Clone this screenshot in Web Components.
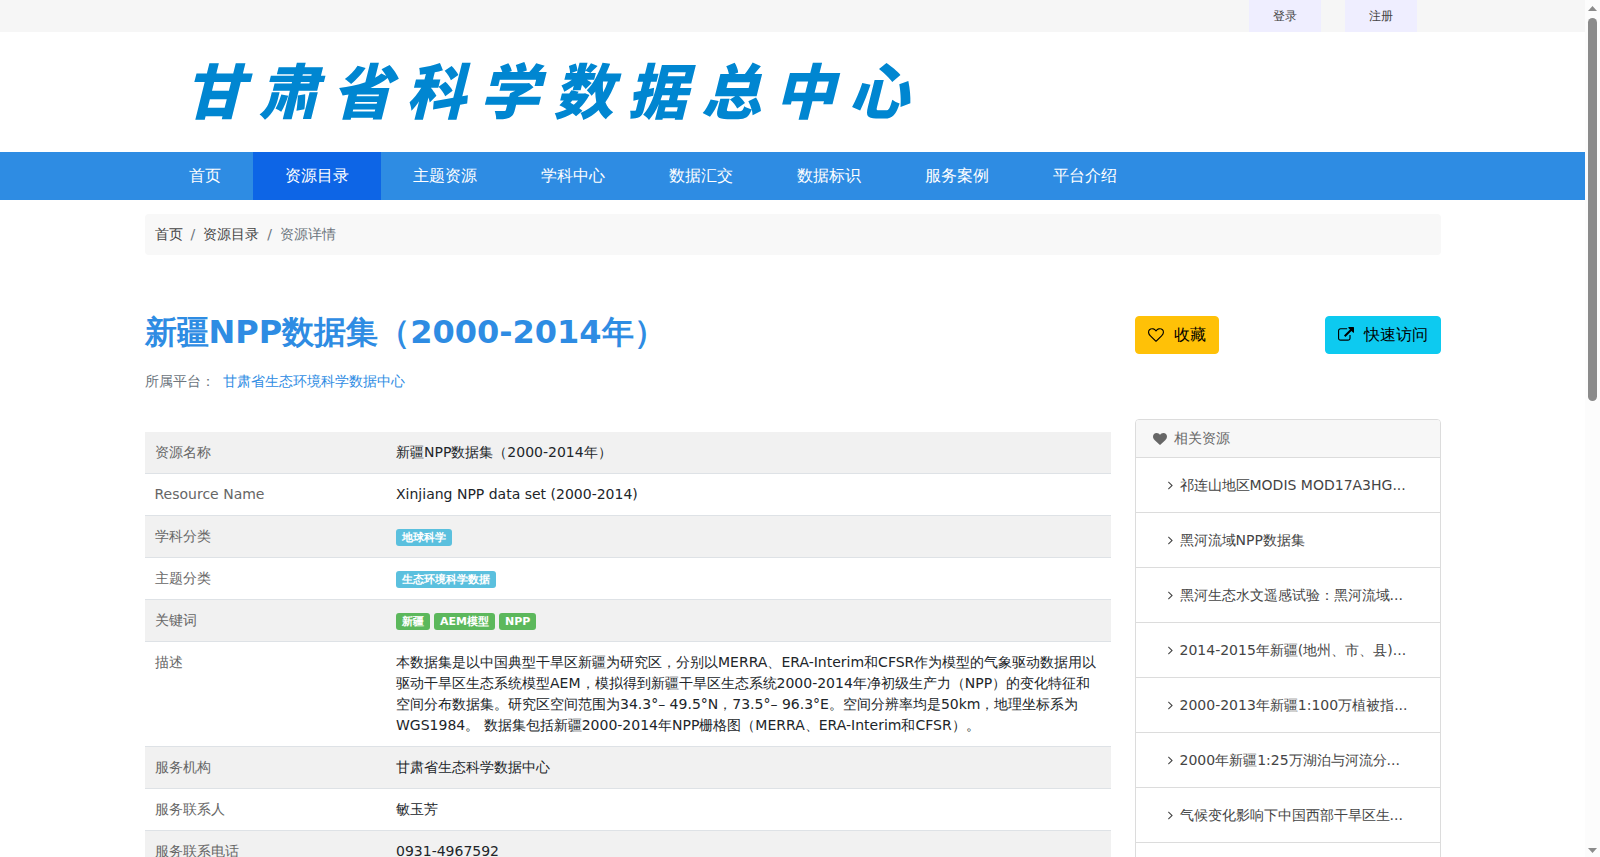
<!DOCTYPE html>
<html>
<head>
<meta charset="utf-8">
<meta name="viewport" content="width=device-width, initial-scale=1">
<title>新疆NPP数据集（2000-2014年） - 甘肃省科学数据总中心</title>
<style>
  body {
    margin: 0;
    background: #fff;
    color: #212529;
    font: 14px/21px "DejaVu Sans", sans-serif;
  }
</style>
</head>
<body>
<gs-app></gs-app>

<template id="app-tpl">
  <style>
    :host { display: flex; height: 100vh; overflow: hidden; }
    .page { flex: 1; min-width: 0; overflow-y: auto; scrollbar-width: none; }
    .wrap { max-width: 1296px; margin: 0 auto; padding: 0 12px; }
    .row { display: grid; grid-template-columns: minmax(0, 1fr) 306px; gap: 24px; padding: 0 0 48px; }
    h1 { margin: 58px 0 0; font-size: 32px; line-height: 38px; font-weight: 700; color: #2e8ce3; }
    .platform { margin: 20px 0 40px; color: #6c757d; }
    .platform a { color: #2e8ce3; text-decoration: none; margin-left: 4px; }
    .actions { display: flex; justify-content: space-between; margin: 61px 0 65px; }
  </style>
  <div class="page">
    <gs-topbar></gs-topbar>
    <gs-brand>甘肃省科学数据总中心</gs-brand>
    <gs-nav></gs-nav>
    <main class="wrap">
      <gs-breadcrumb></gs-breadcrumb>
      <div class="row">
        <section>
          <h1>新疆NPP数据集（2000-2014年）</h1>
          <p class="platform">所属平台： <a href="#platform">甘肃省生态环境科学数据中心</a></p>
          <gs-details></gs-details>
        </section>
        <aside>
          <div class="actions">
            <gs-button icon="heart-o" style="--bg:#ffc107">收藏</gs-button>
            <gs-button icon="external" style="--bg:#0dcaf0">快速访问</gs-button>
          </div>
          <gs-related></gs-related>
        </aside>
      </div>
    </main>
  </div>
  <gs-scrollbar></gs-scrollbar>
</template>

<template id="topbar-tpl">
  <style>
    :host { display: block; background: #f6f6f6; }
    nav { max-width: 1248px; margin: 0 auto; padding: 0 24px; display: flex; justify-content: flex-end; gap: 24px; }
    a { padding: 0 24px; font-size: 12px; line-height: 32px; background: #efeeff; color: #444; text-decoration: none; }
  </style>
  <nav aria-label="用户"><a href="#login">登录</a><a href="#register">注册</a></nav>
</template>

<template id="brand-tpl">
  <style>
    :host { display: block; background: #fff; }
    div { max-width: 1296px; margin: 0 auto; padding: 16px 12px 24px; }
    a {
      display: block; width: 724px; margin-left: 40px;
      font: italic 900 60px/80px "Noto Sans CJK SC", sans-serif;
      color: #0086d1; text-decoration: none; text-align: justify; text-align-last: justify;
    }
  </style>
  <div><a href="#home"><slot></slot></a></div>
</template>

<template id="nav-tpl">
  <style>
    :host { display: block; background: #2e8ce3; }
    nav { max-width: 1272px; margin: 0 auto; display: flex; }
    a { padding: 0 32px; font-size: 16px; line-height: 48px; color: #fff; text-decoration: none; }
    a[aria-current] { background: #0d65e6; }
  </style>
  <nav aria-label="主导航">
    <a href="#home">首页</a>
    <a href="#catalog" aria-current="page">资源目录</a>
    <a href="#topics">主题资源</a>
    <a href="#centers">学科中心</a>
    <a href="#submit">数据汇交</a>
    <a href="#identity">数据标识</a>
    <a href="#cases">服务案例</a>
    <a href="#about">平台介绍</a>
  </nav>
</template>

<template id="breadcrumb-tpl">
  <style>
    :host { display: block; margin-top: 14px; }
    ol { display: flex; margin: 0; padding: 10px; list-style: none; background: #f8f8f8; border-radius: 4px; color: #6c757d; }
    li + li::before { content: "/"; padding: 0 8px; }
    a { color: #444; text-decoration: none; }
  </style>
  <nav aria-label="面包屑">
    <ol>
      <li><a href="#home">首页</a></li>
      <li><a href="#catalog">资源目录</a></li>
      <li aria-current="page">资源详情</li>
    </ol>
  </nav>
</template>

<template id="button-tpl">
  <style>
    :host { display: block; }
    button {
      display: flex; align-items: center; gap: 10px; margin: 0; padding: 6px 12px;
      border: 1px solid var(--bg); border-radius: 4px; background: var(--bg);
      color: #000; font: inherit; font-size: 16px; line-height: 24px; cursor: pointer;
    }
    gs-icon { width: 16px; height: 16px; }
  </style>
  <button type="button"><gs-icon></gs-icon><span><slot></slot></span></button>
</template>

<template id="badge-tpl">
  <style>
    :host {
      display: block; padding: 0 6px; border-radius: 3px; background: #5bc0de;
      color: #fff; font-size: 11px; line-height: 17px; font-weight: 700;
    }
    :host([kind="keyword"]) { background: #5cb85c; }
  </style>
  <slot></slot>
</template>

<template id="details-tpl">
  <style>
    :host { display: block; }
    table { width: 100%; border-collapse: collapse; table-layout: fixed; }
    th, td { padding: 10px; border-bottom: 1px solid #dee2e6; text-align: left; vertical-align: top; }
    th { width: 25%; box-sizing: border-box; font-weight: 400; color: #666; }
    tr:nth-child(odd) { background: #f1f1f1; }
    .tags { display: flex; gap: 4px; padding-top: 3px; }
  </style>
  <table>
    <tbody>
      <tr><th scope="row">资源名称</th><td>新疆NPP数据集（2000-2014年）</td></tr>
      <tr><th scope="row">Resource Name</th><td>Xinjiang NPP data set (2000-2014)</td></tr>
      <tr><th scope="row">学科分类</th><td><div class="tags"><gs-badge>地球科学</gs-badge></div></td></tr>
      <tr><th scope="row">主题分类</th><td><div class="tags"><gs-badge>生态环境科学数据</gs-badge></div></td></tr>
      <tr><th scope="row">关键词</th><td><div class="tags"><gs-badge kind="keyword">新疆</gs-badge><gs-badge kind="keyword">AEM模型</gs-badge><gs-badge kind="keyword">NPP</gs-badge></div></td></tr>
      <tr><th scope="row">描述</th><td>本数据集是以中国典型干旱区新疆为研究区，分别以MERRA、ERA-Interim和CFSR作为模型的气象驱动数据用以驱动干旱区生态系统模型AEM，模拟得到新疆干旱区生态系统2000-2014年净初级生产力（NPP）的变化特征和空间分布数据集。研究区空间范围为34.3°– 49.5°N，73.5°– 96.3°E。空间分辨率均是50km，地理坐标系为WGS1984。 数据集包括新疆2000-2014年NPP栅格图（MERRA、ERA-Interim和CFSR）。</td></tr>
      <tr><th scope="row">服务机构</th><td>甘肃省生态科学数据中心</td></tr>
      <tr><th scope="row">服务联系人</th><td>敏玉芳</td></tr>
      <tr><th scope="row">服务联系电话</th><td>0931-4967592</td></tr>
    </tbody>
  </table>
</template>

<template id="related-tpl">
  <style>
    :host { display: block; border: 1px solid #dcdcdc; border-radius: 4px; background: #fff; }
    h2 {
      display: flex; align-items: center; gap: 7px; margin: 0; padding: 8px 17px;
      background: #f7f7f7; border-radius: 3px 3px 0 0; color: #666; font-size: 14px; line-height: 21px; font-weight: 400;
    }
    h2 gs-icon { width: 14px; height: 14px; }
    ul { margin: 0; padding: 0; list-style: none; }
    li { border-top: 1px solid #dcdcdc; }
    a {
      display: flex; align-items: center; gap: 7px; padding: 16px 32px;
      color: #444; line-height: 22px; text-decoration: none; white-space: nowrap;
    }
    a gs-icon { width: 5px; height: 14px; }
  </style>
  <h2><gs-icon name="heart"></gs-icon>相关资源</h2>
  <ul></ul>
</template>

<template id="scrollbar-tpl">
  <style>
    :host { display: flex; flex: 0 0 15px; flex-direction: column; align-items: center; background: #fcfcfc; }
    gs-icon { width: 9px; height: 17px; color: #8b8b8b; flex: none; }
    .track { flex: 1; width: 9px; padding-top: 1px; }
    .thumb { height: 383px; border-radius: 5px; background: #8b8b8b; }
  </style>
  <gs-icon name="up"></gs-icon>
  <div class="track"><div class="thumb"></div></div>
  <gs-icon name="down"></gs-icon>
</template>

<script>
  class TemplateElement extends HTMLElement {
    constructor() {
      super();
      this.attachShadow({ mode: "open" })
        .append(document.getElementById(this.constructor.template).content.cloneNode(true));
    }
  }

  const HEART = "q-26 0-44-18l-624-602q-10-8-27.5-26t-55.5-65.5-68-97.5-53.5-121-23.5-138q0-220 127-344t351-124q62 0 126.5 21.5t120 58 95.5 68.5 76 68q36-36 76-68t95.5-68.5 120-58 126.5-21.5q224 0 351 124t127 344q0 221-229 450l-623 600q-18 18-44 18z";
  const ICONS = {
    "heart": ["0 0 1792 1792", "M896 1664" + HEART],
    "heart-o": ["0 0 1792 1792", "M1664 596q0-81-21.5-143t-55-98.5-81.5-59.5-94-31-98-8-112 25.5-110.5 64-86.5 72-60 61.5q-18 22-49 22t-49-22q-24-28-60-61.5t-86.5-72-110.5-64-112-25.5-98 8-94 31-81.5 59.5-55 98.5-21.5 143q0 168 187 355l581 560 580-559q188-188 188-356zm128 0q0 221-229 450l-623 600q-18 18-44 18t-44-18l-624-602q-10-8-27.5-26t-55.5-65.5-68-97.5-53.5-121-23.5-138q0-220 127-344t351-124q62 0 126.5 21.5t120 58 95.5 68.5 76 68q36-36 76-68t95.5-68.5 120-58 126.5-21.5q224 0 351 124t127 344z"],
    "external": ["0 0 1792 1792", "M1408 928v320q0 119-84.5 203.5t-203.5 84.5h-832q-119 0-203.5-84.5t-84.5-203.5v-832q0-119 84.5-203.5t203.5-84.5h704q14 0 23 9t9 23v64q0 14-9 23t-23 9h-704q-66 0-113 47t-47 113v832q0 66 47 113t113 47h832q66 0 113-47t47-113v-320q0-14 9-23t23-9h64q14 0 23 9t9 23zm384-864v512q0 26-19 45t-45 19-45-19l-176-176-652 652q-10 10-23 10t-23-10l-114-114q-10-10-10-23t10-23l652-652-176-176q-19-19-19-45t19-45 45-19h512q26 0 45 19t19 45z"],
    "angle": ["576 0 640 1792", "M1171 960q0 13-10 23l-466 466q-10 10-23 10t-23-10l-50-50q-10-10-10-23t10-23l393-393-393-393q-10-10-10-23t10-23l50-50q10-10 23-10t23 10l466 466q10 10 10 23z"],
    "up": ["0 0 9 17", "M0 11L4.5 6L9 11z"],
    "down": ["0 0 9 17", "M0 8L4.5 13L9 8z"]
  };

  customElements.define("gs-icon", class extends HTMLElement {
    static observedAttributes = ["name"];
    constructor() {
      super();
      this.attachShadow({ mode: "open" });
    }
    attributeChangedCallback() {
      const [box, path] = ICONS[this.getAttribute("name")];
      this.shadowRoot.innerHTML =
        `<style>:host{display:block;flex:none}svg{display:block;width:100%;height:100%;fill:currentColor}</style>
         <svg viewBox="${box}" aria-hidden="true"><path d="${path}"/></svg>`;
    }
  });

  customElements.define("gs-button", class extends TemplateElement {
    static template = "button-tpl";
    connectedCallback() {
      this.shadowRoot.querySelector("gs-icon").setAttribute("name", this.getAttribute("icon"));
    }
  });

  customElements.define("gs-related", class extends TemplateElement {
    static template = "related-tpl";
    static items = [
      "祁连山地区MODIS MOD17A3HG...",
      "黑河流域NPP数据集",
      "黑河生态水文遥感试验：黑河流域...",
      "2014-2015年新疆(地州、市、县)...",
      "2000-2013年新疆1:100万植被指...",
      "2000年新疆1:25万湖泊与河流分...",
      "气候变化影响下中国西部干旱区生..."
    ];
    connectedCallback() {
      this.shadowRoot.querySelector("ul").innerHTML = this.constructor.items
        .map(t => `<li><a href="#resource"><gs-icon name="angle"></gs-icon><span>${t}</span></a></li>`)
        .join("") + "<li><a href='#more' aria-label='更多'>&nbsp;</a></li>";
    }
  });

  for (const name of ["topbar", "brand", "nav", "breadcrumb", "badge", "details", "scrollbar", "app"]) {
    customElements.define("gs-" + name, class extends TemplateElement {
      static template = name + "-tpl";
    });
  }
</script>
</body>
</html>
